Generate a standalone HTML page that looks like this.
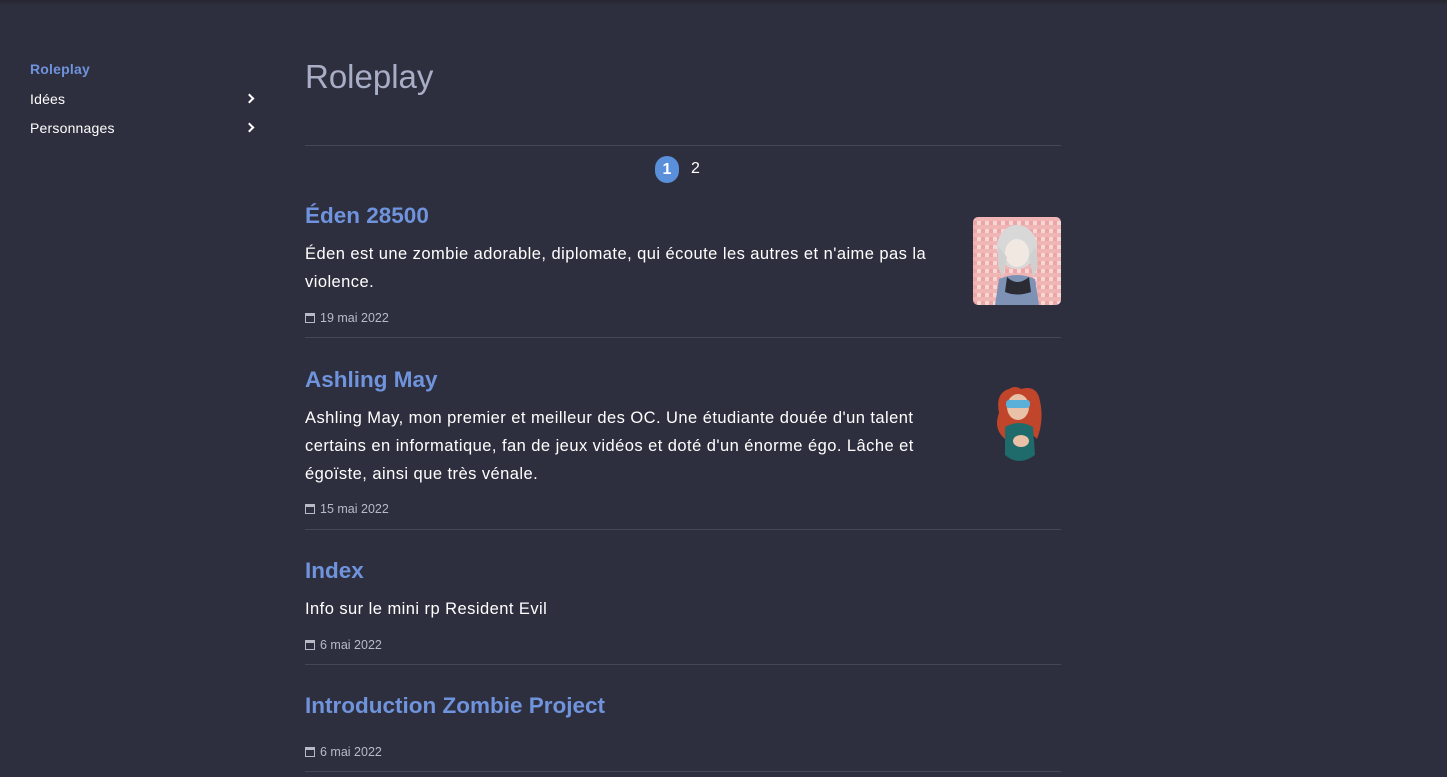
<!DOCTYPE html>
<html><head><meta charset="utf-8"><style>
*{margin:0;padding:0;box-sizing:border-box}
body{width:1447px;height:777px;background:#2e2f3e;font-family:"Liberation Sans",sans-serif;color:#fff;position:relative;overflow:hidden}
.top{position:absolute;left:0;top:0;width:100%;height:6px;background:linear-gradient(#25262f,#2e2f3e)}
.nav{position:absolute;left:30px;font-size:14px;letter-spacing:0.2px}
.chev{position:absolute;left:246px;width:7px;height:7px;border-right:2px solid #fff;border-top:2px solid #fff;transform:rotate(45deg)}
h1{position:absolute;left:305px;top:58px;font-size:33px;font-weight:normal;color:#a9aec7}
.hr{position:absolute;left:305px;width:756px;height:1px;background:#454657}
.t{position:absolute;left:305px;font-size:22.5px;font-weight:bold;color:#6f93dc;letter-spacing:0}
.p{position:absolute;left:305px;font-size:16.5px;line-height:28px;white-space:nowrap;letter-spacing:0.45px}
.d{position:absolute;left:305px;font-size:12.5px;color:#b8bac6}
.d i{display:inline-block;width:10px;height:10px;border:1.5px solid #b8bac6;border-top-width:3px;margin-right:5px;vertical-align:-1px;position:relative}
</style></head><body>
<div class="top"></div>
<div class="nav" style="top:61px;color:#6f93dc;font-weight:bold">Roleplay</div>
<div class="nav" style="top:91px">Idées</div>
<div class="nav" style="top:120px">Personnages</div>
<div class="chev" style="top:95px"></div>
<div class="chev" style="top:124px"></div>
<h1>Roleplay</h1>
<div class="hr" style="top:145px"></div>
<div style="position:absolute;left:655px;top:156px;width:24px;height:27px;border-radius:12px;background:#5a8fd9;text-align:center;line-height:27px;font-size:16px;font-weight:bold">1</div>
<div style="position:absolute;left:691px;top:160px;font-size:16px">2</div>

<div class="t" style="top:203px">Éden 28500</div>
<div class="p" style="top:240px">Éden est une zombie adorable, diplomate, qui écoute les autres et n'aime pas la<br>violence.</div>
<div class="d" style="top:311px"><i></i>19 mai 2022</div>
<svg style="position:absolute;left:973px;top:217px" width="88" height="88"><defs><pattern id="c" width="8" height="8" patternUnits="userSpaceOnUse"><rect width="8" height="8" fill="#f6d6d6"/><rect width="4" height="8" fill="#eda6a6"/><rect width="8" height="4" fill="#f0b5b5"/></pattern><clipPath id="r"><rect width="88" height="88" rx="5"/></clipPath></defs><g clip-path="url(#r)"><rect width="88" height="88" fill="url(#c)"/><path d="M22 88 L26 62 Q44 54 62 62 L66 88Z" fill="#7d92b4"/><path d="M34 60 Q44 70 56 60 L58 75 Q44 80 32 75Z" fill="#2b2b33"/><ellipse cx="44" cy="30" rx="20" ry="22" fill="#d8d8d8"/><ellipse cx="44" cy="36" rx="12" ry="14" fill="#f2e8e2"/><path d="M26 30 Q22 50 30 60 L34 40Z M62 30 Q68 50 60 60 L56 40Z" fill="#d0d0d0"/></g></svg>

<div class="hr" style="top:337px"></div>
<div class="t" style="top:367px">Ashling May</div>
<div class="p" style="top:404px">Ashling May, mon premier et meilleur des OC. Une étudiante douée d'un talent<br>certains en informatique, fan de jeux vidéos et doté d'un énorme égo. Lâche et<br>égoïste, ainsi que très vénale.</div>
<div class="d" style="top:502px"><i></i>15 mai 2022</div>
<svg style="position:absolute;left:985px;top:383px" width="70" height="86"><path d="M14 30 Q10 10 24 6 Q30 2 36 6 Q50 2 54 14 Q60 36 52 56 L46 50 L30 50 L20 56 Q8 46 14 30Z" fill="#c0452a"/><ellipse cx="33" cy="24" rx="11" ry="13" fill="#e8c1a6"/><rect x="21" y="17" width="24" height="8" rx="3" fill="#5ab0d8"/><path d="M20 44 Q34 36 48 44 L50 72 Q34 84 20 72Z" fill="#1f6a6a"/><ellipse cx="36" cy="58" rx="8" ry="6" fill="#e8c1a6"/></svg>

<div class="hr" style="top:529px"></div>
<div class="t" style="top:558px">Index</div>
<div class="p" style="top:595px">Info sur le mini rp Resident Evil</div>
<div class="d" style="top:638px"><i></i>6 mai 2022</div>
<div class="hr" style="top:664px"></div>
<div class="t" style="top:693px">Introduction Zombie Project</div>
<div class="d" style="top:745px"><i></i>6 mai 2022</div>
<div class="hr" style="top:771px"></div>
</body></html>
